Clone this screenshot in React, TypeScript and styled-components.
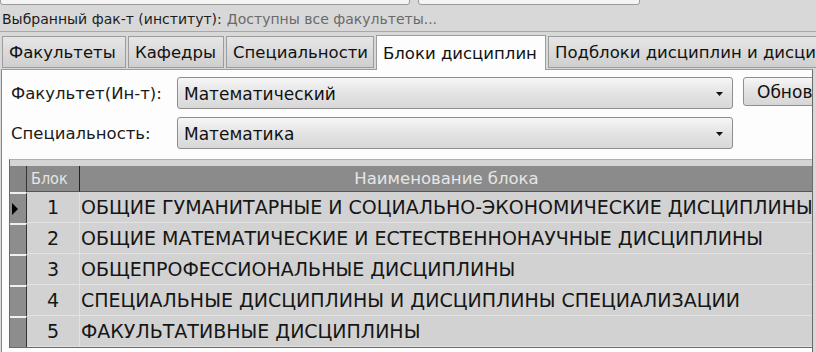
import * as React from "react";
import styled, { createGlobalStyle } from "styled-components";

const GlobalStyle = createGlobalStyle`
  html, body {
    margin: 0;
    padding: 0;
    background: #d8d8d8;
  }
  body {
    font-family: "DejaVu Sans", Verdana, sans-serif;
  }
`;

const tabs = [
  { label: "Факультеты", width: 124 },
  { label: "Кафедры", width: 96 },
  { label: "Специальности", width: 148 },
  { label: "Блоки дисциплин", width: 170, active: true },
  { label: "Подблоки дисциплин и дисциплины", width: 300 },
];

const blocks = [
  "ОБЩИЕ ГУМАНИТАРНЫЕ И СОЦИАЛЬНО-ЭКОНОМИЧЕСКИЕ ДИСЦИПЛИНЫ",
  "ОБЩИЕ МАТЕМАТИЧЕСКИЕ И ЕСТЕСТВЕННОНАУЧНЫЕ ДИСЦИПЛИНЫ",
  "ОБЩЕПРОФЕССИОНАЛЬНЫЕ ДИСЦИПЛИНЫ",
  "СПЕЦИАЛЬНЫЕ ДИСЦИПЛИНЫ И ДИСЦИПЛИНЫ СПЕЦИАЛИЗАЦИИ",
  "ФАКУЛЬТАТИВНЫЕ ДИСЦИПЛИНЫ",
];

const Arrow: React.FC = () => (
  <svg width="9" height="9" viewBox="0 0 9 9">
    <path d="M1 2 L8 2 L4.5 6 Z" fill="#111" />
  </svg>
);

const App: React.FC = () => {
  return (
    <>
      <GlobalStyle />
      <Window>
        <TopStrip>
          <StripBox width={410} />
          <StripBox width={222} />
        </TopStrip>
        <StatusLine>
          <StatusLabel>Выбранный фак-т (институт):</StatusLabel>
          <StatusValue>Доступны все факультеты...</StatusValue>
        </StatusLine>
        <TabBar>
          {tabs.map((t) => (
            <Tab key={t.label} width={t.width} active={t.active}>
              {t.label}
            </Tab>
          ))}
        </TabBar>
        <Panel>
          <FilterRow>
            <FilterLabel>Факультет(Ин-т):</FilterLabel>
            <Combo>
              <ComboText>Математический</ComboText>
              <Arrow />
            </Combo>
            <RefreshButton>Обновить</RefreshButton>
          </FilterRow>
          <FilterRow>
            <FilterLabel>Специальность:</FilterLabel>
            <Combo>
              <ComboText>Математика</ComboText>
              <Arrow />
            </Combo>
          </FilterRow>
          <Grid>
            <HeaderIndicator />
            <HeaderCell>Блок</HeaderCell>
            <HeaderCell center>Наименование блока</HeaderCell>
            {blocks.map((b, i) => (
              <React.Fragment key={b}>
                <RowIndicator>
                  {i === 0 && (
                    <svg width="8" height="12" viewBox="0 0 8 12">
                      <path d="M1 0 L7 6 L1 12 Z" fill="#000" />
                    </svg>
                  )}
                </RowIndicator>
                <NumCell>{i + 1}</NumCell>
                <NameCell>{b}</NameCell>
              </React.Fragment>
            ))}
          </Grid>
        </Panel>
      </Window>
    </>
  );
};

export default App;

const Window = styled.div`
  width: 816px;
  height: 352px;
  overflow: hidden;
  display: flex;
  flex-direction: column;
  background: #d8d8d8;
`;

const TopStrip = styled.div`
  height: 6px;
  display: flex;
  gap: 8px;
  overflow: hidden;
`;

const StripBox = styled.div<{ width: number }>`
  width: ${(p) => p.width}px;
  height: 20px;
  margin-top: -15px;
  flex: none;
  box-sizing: border-box;
  background: #f4f4f4;
  border: 1px solid #9a9a9a;
  border-radius: 3px;
`;

const StatusLine = styled.div`
  height: 25px;
  display: flex;
  align-items: center;
  gap: 5px;
  padding-left: 2px;
  font-family: "DejaVu Sans", sans-serif;
  font-size: 14px;
  border-bottom: 1px solid #a8a8a8;
  white-space: nowrap;
`;

const StatusLabel = styled.span`
  color: #1c1c1c;
`;

const StatusValue = styled.span`
  color: #6a6a6a;
`;

const TabBar = styled.div`
  display: flex;
  align-items: flex-end;
  height: 37px;
  padding-left: 2px;
  gap: 2px;
  white-space: nowrap;
`;

const Tab = styled.div<{ width: number; active?: boolean }>`
  width: ${(p) => p.width}px;
  flex: none;
  box-sizing: border-box;
  height: ${(p) => (p.active ? 35 : 32)}px;
  margin-bottom: ${(p) => (p.active ? -1 : 1)}px;
  padding-left: 6px;
  display: flex;
  align-items: center;
  font-size: 16.5px;
  color: #111;
  background: ${(p) =>
    p.active ? "#fdfdfd" : "linear-gradient(#e6e6e6, #cfcfcf)"};
  border: 1px solid #9c9c9c;
  border-bottom: ${(p) => (p.active ? "none" : "1px solid #9c9c9c")};
  position: relative;
  z-index: ${(p) => (p.active ? 1 : 0)};
  overflow: hidden;
`;

const Panel = styled.div`
  flex: 1;
  width: 812px;
  box-sizing: border-box;
  background: #fdfdfd;
  border-left: 1px solid #8a8a8a;
  border-right: 1px solid #6a6a6a;
  border-top: 1px solid #9c9c9c;
  margin-left: 1px;
  padding: 7px 0 0 7px;
  display: flex;
  flex-direction: column;
  gap: 8px;
  overflow: hidden;
`;

const FilterRow = styled.div`
  display: flex;
  align-items: center;
  gap: 8px;
  height: 32px;
`;

const FilterLabel = styled.div`
  width: 158px;
  flex: none;
  padding-left: 2px;
  font-size: 16.5px;
  color: #1a1a1a;
  white-space: nowrap;
`;

const Combo = styled.div`
  width: 556px;
  height: 32px;
  flex: none;
  box-sizing: border-box;
  display: flex;
  align-items: center;
  justify-content: space-between;
  padding: 2px 8px 0 6px;
  border: 1px solid #8e8e8e;
  border-radius: 3px;
  background: linear-gradient(#f6f6f6, #e4e4e4 50%, #d8d8d8);
`;

const ComboText = styled.span`
  font-size: 17px;
  color: #111;
`;

const RefreshButton = styled.div`
  flex: none;
  width: 100px;
  height: 29px;
  box-sizing: border-box;
  margin-left: 2px;
  margin-top: -3px;
  padding-left: 13px;
  display: flex;
  align-items: center;
  font-size: 17px;
  color: #111;
  border: 1px solid #8e8e8e;
  border-radius: 3px;
  background: linear-gradient(#f6f6f6, #e2e2e2 50%, #d6d6d6);
  overflow: hidden;
  white-space: nowrap;
`;

const Grid = styled.div`
  margin-top: 2px;
  width: 805px;
  box-sizing: border-box;
  border: 1px solid #6a6a6a;
  border-top-color: #b0b0b0;
  border-right: none;
  padding-top: 6px;
  display: grid;
  grid-template-columns: 17px 53px 1fr;
  grid-auto-rows: 31px;
  grid-template-rows: 26px;
  background: #d4d4d4;
  font-family: "DejaVu Sans", sans-serif;
`;

const HeaderIndicator = styled.div`
  background: #858585;
  border-right: 1px solid #333;
`;

const HeaderCell = styled.div<{ center?: boolean }>`
  background: #8b8b8b;
  color: #e6e6e6;
  font-size: ${(p) => (p.center ? 16.5 : 16)}px;
  font-family: ${(p) =>
    p.center ? '"DejaVu Sans", sans-serif' : '"DejaVu Sans Condensed", sans-serif'};
  display: flex;
  align-items: center;
  justify-content: ${(p) => (p.center ? "center" : "flex-start")};
  padding-left: ${(p) => (p.center ? 0 : 4)}px;
  border-right: 1px solid #222;
  border-bottom: 1px solid #555;
`;

const RowIndicator = styled.div`
  background: #8d8d8d;
  border-top: 2px solid #f0f0f0;
  border-right: 1px solid #333;
  display: flex;
  align-items: center;
  padding-left: 1px;
`;

const NumCell = styled.div`
  background: #d2d2d2;
  border-bottom: 1px solid #e2e2e2;
  border-right: 1px solid #e2e2e2;
  display: flex;
  align-items: center;
  justify-content: center;
  font-size: 19px;
  color: #161616;
`;

const NameCell = styled.div`
  background: #d2d2d2;
  border-bottom: 1px solid #e2e2e2;
  display: flex;
  align-items: center;
  padding-left: 1px;
  font-size: 19px;
  color: #161616;
  white-space: nowrap;
  overflow: hidden;
`;
